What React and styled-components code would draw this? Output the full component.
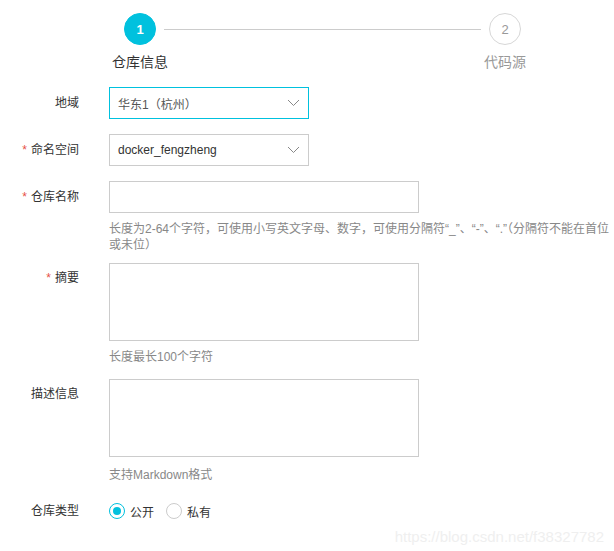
import React from 'react';
import styled, { createGlobalStyle } from 'styled-components';

const GlobalStyle = createGlobalStyle`
  html, body {
    margin: 0;
    padding: 0;
    background: #fff;
  }
  body {
    font-family: "Liberation Sans", "Noto Sans CJK SC", sans-serif;
    font-size: 12px;
    color: #333;
  }
`;

const Page = styled.div`
  position: relative;
  width: 614px;
  height: 551px;
  overflow: hidden;
  padding-top: 13px;
  box-sizing: border-box;
`;

// step indicator
const Steps = styled.div`
  width: 414px;
  margin-left: 112px;
`;

const StepHead = styled.div`
  display: flex;
  align-items: center;
  padding: 0 5px 0 12px;
`;

const StepCircle = styled.div`
  width: 32px;
  height: 32px;
  border-radius: 50%;
  box-sizing: border-box;
  display: flex;
  align-items: center;
  justify-content: center;
  font-size: 13px;
  font-weight: ${props => (props.active ? 'bold' : 'normal')};
  background: ${props => (props.active ? '#00c1de' : '#fff')};
  color: ${props => (props.active ? '#fff' : '#999')};
  border: 1px solid ${props => (props.active ? '#00c1de' : '#d7d7d7')};
  flex-shrink: 0;
`;

const Connector = styled.div`
  flex: 1;
  height: 1px;
  background: #ccc;
  margin: 0 8px;
`;

const StepLabels = styled.div`
  display: flex;
  justify-content: space-between;
  margin-top: 7px;
`;

const StepLabel = styled.div`
  font-size: 14px;
  line-height: 20px;
  color: ${props => (props.active ? '#333' : '#999')};
`;

// form
const Form = styled.div`
  margin-top: 15px;
`;

const Row = styled.div`
  display: flex;
  align-items: flex-start;
  margin-bottom: ${props => props.mb || 15}px;
`;

const Label = styled.div`
  width: 79px;
  flex-shrink: 0;
  text-align: right;
  margin-right: 30px;
  line-height: ${props => props.lh || 32}px;
  color: #333;
  white-space: nowrap;
`;

const Required = styled.span`
  color: #e64f46;
  margin-right: 4px;
`;

const Control = styled.div`
  flex: 1;
  min-width: 0;
`;

const Select = styled.div`
  width: 200px;
  height: 32px;
  box-sizing: border-box;
  border: 1px solid ${props => (props.focused ? '#00c1de' : '#ccc')};
  padding: 0 8px;
  display: flex;
  align-items: center;
  justify-content: space-between;
  color: ${props => (props.focused ? '#555' : '#333')};
  font-size: 12px;
`;

const Input = styled.div`
  width: 310px;
  height: 32px;
  box-sizing: border-box;
  border: 1px solid #ccc;
`;

const TextArea = styled.div`
  width: 310px;
  height: 78px;
  box-sizing: border-box;
  border: 1px solid #ccc;
`;

const Help = styled.div`
  width: 510px;
  margin-top: ${props => props.mt || 8}px;
  line-height: 16px;
  color: #888;
  font-size: 12px;
`;

const Radios = styled.div`
  display: flex;
  align-items: center;
  height: 32px;
`;

const RadioItem = styled.label`
  display: flex;
  align-items: center;
  margin-right: 12px;
  color: #333;
`;

const RadioDot = styled.span`
  width: 16px;
  height: 16px;
  box-sizing: border-box;
  border-radius: 50%;
  border: 1px solid ${props => (props.checked ? '#00c1de' : '#ccc')};
  margin-right: 5px;
  display: flex;
  align-items: center;
  justify-content: center;

  &::after {
    content: '';
    width: 8px;
    height: 8px;
    border-radius: 50%;
    background: ${props => (props.checked ? '#00c1de' : 'transparent')};
  }
`;

const Watermark = styled.div`
  position: absolute;
  right: 10px;
  bottom: 6px;
  font-size: 15px;
  color: #efefef;
  font-family: "Liberation Sans", sans-serif;
`;

const Chevron = () => (
  <svg width="13" height="8" viewBox="0 0 13 8" fill="none">
    <path d="M1 1l5.5 5.5L12 1" stroke="#888" strokeWidth="1" />
  </svg>
);

export default function App() {
  return (
    <>
      <GlobalStyle />
      <Page>
        <Steps>
          <StepHead>
            <StepCircle active>1</StepCircle>
            <Connector />
            <StepCircle>2</StepCircle>
          </StepHead>
          <StepLabels>
            <StepLabel active>仓库信息</StepLabel>
            <StepLabel>代码源</StepLabel>
          </StepLabels>
        </Steps>

        <Form>
          <Row>
            <Label>地域</Label>
            <Control>
              <Select focused>
                <span>华东1（杭州）</span>
                <Chevron />
              </Select>
            </Control>
          </Row>

          <Row>
            <Label><Required>*</Required>命名空间</Label>
            <Control>
              <Select>
                <span>docker_fengzheng</span>
                <Chevron />
              </Select>
            </Control>
          </Row>

          <Row mb={10}>
            <Label><Required>*</Required>仓库名称</Label>
            <Control>
              <Input />
              <Help>
                长度为2-64个字符，可使用小写英文字母、数字，可使用分隔符“_”、“-”、“.”（分隔符不能在首位或未位）
              </Help>
            </Control>
          </Row>

          <Row mb={14}>
            <Label lh={30}><Required>*</Required>摘要</Label>
            <Control>
              <TextArea />
              <Help>长度最长100个字符</Help>
            </Control>
          </Row>

          <Row mb={12}>
            <Label lh={30}>描述信息</Label>
            <Control>
              <TextArea />
              <Help mt={10}>支持Markdown格式</Help>
            </Control>
          </Row>

          <Row>
            <Label>仓库类型</Label>
            <Control>
              <Radios>
                <RadioItem>
                  <RadioDot checked />
                  公开
                </RadioItem>
                <RadioItem>
                  <RadioDot />
                  私有
                </RadioItem>
              </Radios>
            </Control>
          </Row>
        </Form>

        <Watermark>https://blog.csdn.net/f38327782</Watermark>
      </Page>
    </>
  );
}
